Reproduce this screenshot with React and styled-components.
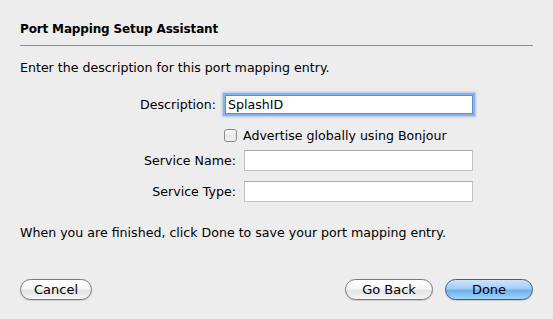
import React from "react";
import styled, { createGlobalStyle } from "styled-components";

const Global = createGlobalStyle`
  html, body { margin: 0; padding: 0; background: #ededed; }
  body { font-family: "DejaVu Sans", "Lucida Grande", sans-serif; font-size: 12.6px; color: #000; }
`;

const Page = styled.div`
  width: 553px;
  height: 319px;
  box-sizing: border-box;
  padding: 22px 20px 0;
  display: flex;
  flex-direction: column;
  background: #ededed;
`;

const Title = styled.div`
  font-weight: bold;
  font-size: 12px;
  letter-spacing: -0.15px;
  line-height: 15px;
`;

const Rule = styled.div`
  margin-top: 8px;
  height: 1px;
  background: #8e8e8e;
`;

const Text = styled.div`
  margin-top: ${(p) => p.$mt}px;
  line-height: 15px;
`;

const Form = styled.div`
  margin-top: 20px;
  display: flex;
  flex-direction: column;
`;

const Row = styled.div`
  display: flex;
  align-items: center;
  margin-top: ${(p) => p.$mt || 0}px;
  height: ${(p) => p.$h}px;
`;

const Label = styled.label`
  width: ${(p) => p.$w}px;
  text-align: right;
  flex: none;
  margin-right: ${(p) => p.$gap}px;
  line-height: 15px;
`;

const Field = styled.div`
  box-sizing: border-box;
  width: ${(p) => p.$w}px;
  height: 100%;
  background: #fff;
  border: 1px solid #c3c3c3;
  border-top-color: #a9a9a9;
  padding-left: 2px;
  display: flex;
  align-items: center;
  line-height: 15px;
  ${(p) =>
    p.$focus &&
    `
    border-color: #5f8fcf;
    box-shadow: 0 0 0 2px #86b2e6, 0 0 2px 3px rgba(130, 175, 230, 0.6);
  `}
`;

const Check = styled.span`
  box-sizing: border-box;
  width: 13px;
  height: 13px;
  border: 1px solid #8a8a8a;
  border-radius: 3px;
  background: linear-gradient(#fdfdfd, #e6e6e6 55%, #f4f4f4);
  margin-right: 6px;
  flex: none;
`;

const Buttons = styled.div`
  margin-top: 39px;
  display: flex;
  align-items: center;
`;

const Spacer = styled.div`
  flex: 1;
`;

const Button = styled.button`
  box-sizing: border-box;
  width: ${(p) => p.$w}px;
  height: 21px;
  border-radius: 11px;
  font-family: inherit;
  font-size: 13px;
  color: #000;
  padding: 0;
  margin-left: ${(p) => p.$ml || 0}px;
  border: 1px solid #7a7a7a;
  background: linear-gradient(#ffffff, #f7f7f7 45%, #e4e4e4 55%, #f5f5f5);
  box-shadow: 0 1px 1px rgba(0, 0, 0, 0.15);
  ${(p) =>
    p.$default &&
    `
    border-color: #3d5d92;
    background: linear-gradient(#cbe5fb, #a4cdf3 45%, #6fb0ec 55%, #9fd3fb);
  `}
`;

export default function App() {
  return (
    <>
      <Global />
      <Page>
        <Title>Port Mapping Setup Assistant</Title>
        <Rule />
        <Text $mt={14}>Enter the description for this port mapping entry.</Text>
        <Form>
          <Row $h={19}>
            <Label $w={196} $gap={9}>Description:</Label>
            <Field $w={248} $focus>SplashID</Field>
          </Row>
          <Row $h={15} $mt={14}>
            <Label $w={204} $gap={0} />
            <Check />
            <span>Advertise globally using Bonjour</span>
          </Row>
          <Row $h={21} $mt={7}>
            <Label $w={216} $gap={8}>Service Name:</Label>
            <Field $w={229} />
          </Row>
          <Row $h={21} $mt={10}>
            <Label $w={216} $gap={8}>Service Type:</Label>
            <Field $w={229} />
          </Row>
        </Form>
        <Text $mt={23}>When you are finished, click Done to save your port mapping entry.</Text>
        <Buttons>
          <Button $w={72}>Cancel</Button>
          <Spacer />
          <Button $w={88}>Go Back</Button>
          <Button $w={88} $ml={12} $default>Done</Button>
        </Buttons>
      </Page>
    </>
  );
}
